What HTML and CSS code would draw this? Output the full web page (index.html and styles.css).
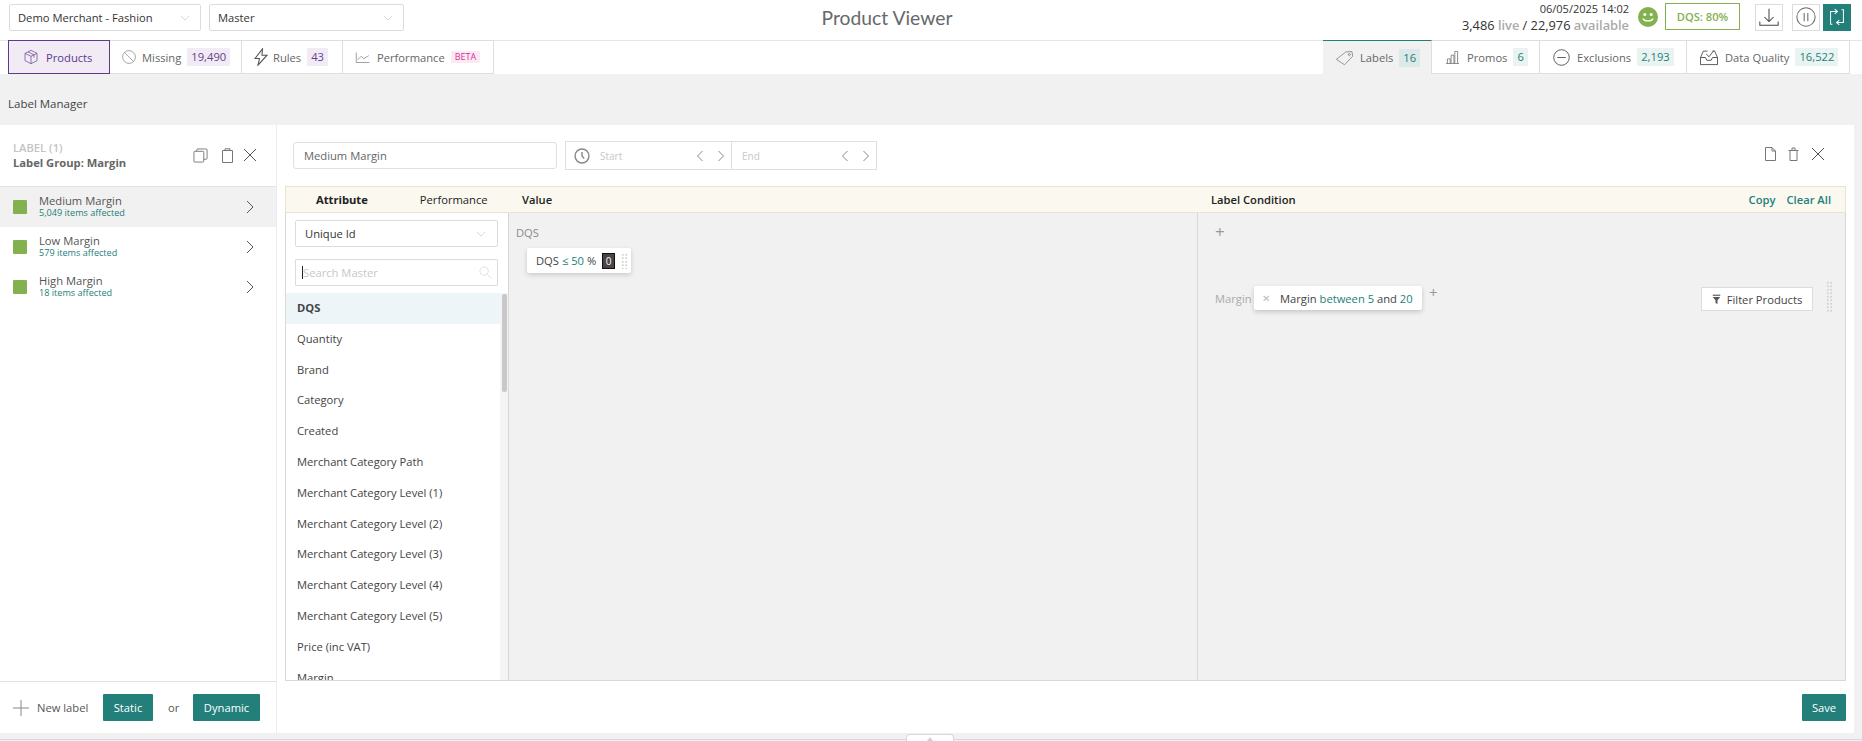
FILE: index.html
```html
<!DOCTYPE html>
<html lang="en">
<head>
<meta charset="utf-8">
<title>Product Viewer</title>
<link rel="stylesheet" href="styles.css">
</head>
<body>
<header class="topbar">
  <div class="selects">
    <div class="select sel-merchant"><span>Demo Merchant - Fashion</span><svg class="chev" viewBox="0 0 12 7"><path d="M1 1l5 5 5-5"/></svg></div>
    <div class="select sel-master"><span>Master</span><svg class="chev" viewBox="0 0 12 7"><path d="M1 1l5 5 5-5"/></svg></div>
  </div>
  <h1 class="title">Product Viewer</h1>
  <div class="status">
    <div class="status-text">
      <div class="status-date">06/05/2025 14:02</div>
      <div class="status-count"><b>3,486</b> <i>live</i> <b>/ 22,976</b> <i>available</i></div>
    </div>
    <svg class="smile" viewBox="0 0 20 20"><circle cx="10" cy="10" r="10" fill="#84b14f"/><circle cx="6.800" cy="7.500" r="1.500" fill="#fff"/><circle cx="13.200" cy="7.500" r="1.500" fill="#fff"/><path d="M5 11.500c1.200 3.200 8.800 3.200 10 0" fill="none" stroke="#fff" stroke-width="1.400"/></svg>
    <div class="dqs">DQS: 80%</div>
    <div class="sq-btn btn-down"><svg viewBox="0 0 24 24"><path d="M12 3v14M7 12l5 5 5-5M2 17v4h20v-4"/></svg></div>
    <div class="sq-btn btn-pause"><svg viewBox="0 0 24 24"><circle cx="12" cy="12" r="10"/><path d="M10 7.500v9M14 7.500v9"/></svg></div>
    <div class="sq-btn btn-swap"><svg viewBox="0 0 24 24"><path d="M7 20h-2V6h7M9.500 3.500L12.500 6 9.500 8.500M17 4h2v14h-7M14.500 15.500L11.500 18l3 2.500"/></svg></div>
  </div>
</header>

<nav class="tabs">
  <div class="tabgroup">
    <div class="tab tab-products">
      <svg class="ico ico-products" viewBox="0 0 24 24"><path d="M12 2l9 4.500v11L12 22l-9-4.500v-11zM3 6.500l9 4.500 9-4.500M12 11v11M7.500 4.300l9 4.500v4"/></svg>
      <span>Products</span>
    </div>
    <div class="tab tab-missing">
      <svg class="ico ico-missing" viewBox="0 0 24 24"><circle cx="12" cy="12" r="11"/><path d="M4.500 4.500l15 15"/></svg>
      <span>Missing</span><em class="pill pill-purple">19,490</em>
    </div>
    <div class="tab tab-rules">
      <svg class="ico ico-rules" viewBox="0 0 14 18"><path d="M8.500 .8L1 10.500h4.500L4 17.200l9-10H8z"/></svg>
      <span>Rules</span><em class="pill pill-purple">43</em>
    </div>
    <div class="tab tab-perf">
      <svg class="ico ico-perf" viewBox="0 0 24 24"><path d="M2 4v16h21M4 16l6-6 4 4 8-5"/></svg>
      <span>Performance</span><em class="pill pill-pink">BETA</em>
    </div>
  </div>
  <div class="tabgroup">
    <div class="tab tab-labels">
      <svg class="ico ico-labels" viewBox="0 0 28 24"><path d="M2 14L16 3l9-.5 1 7L14 22zM21 5.500a1.500 1.500 0 1 0 .1 0"/></svg>
      <span>Labels</span><em class="pill pill-teal-dark">16</em>
    </div>
    <div class="tab tab-promos">
      <svg class="ico ico-promos" viewBox="0 0 14 14"><path d="M0 13.500h14M1.500 13.500v-5h3v5M5.500 13.500v-9h3v9M9.500 13.500V.5h3v13"/></svg>
      <span>Promos</span><em class="pill pill-teal">6</em>
    </div>
    <div class="tab tab-excl">
      <svg class="ico ico-excl ico-dark" viewBox="0 0 24 24"><circle cx="12" cy="12" r="11"/><path d="M6 12h12"/></svg>
      <span>Exclusions</span><em class="pill pill-teal">2,193</em>
    </div>
    <div class="tab tab-dq">
      <svg class="ico ico-dq ico-dark" viewBox="0 0 28 24"><path d="M2 12l4-9h6M26 12l-4-9h-3M2 12v10h24V12h-7l-2 4h-6l-2-4zM10 7l4 4 7-9"/></svg>
      <span>Data Quality</span><em class="pill pill-teal">16,522</em>
    </div>
  </div>
</nav>

<div class="crumb">Label Manager</div>

<main class="panel">
  <aside class="side">
    <div class="side-head">
      <div>
        <div class="side-kicker">LABEL (1)</div>
        <div class="side-title">Label Group: Margin</div>
      </div>
      <div class="side-tools">
        <svg class="tool" viewBox="0 0 16 16"><path d="M1 4.500q0-1 1-1h8.500q1 0 1 1V14q0 1-1 1H2q-1 0-1-1zM4 3.500V2q0-1 1-1h9q1 0 1 1v9q0 1-1 1h-2.500"/></svg>
        <svg class="tool tool-trash" viewBox="0 0 11 15"><path d="M.5 2.500h10V14.500H.5zM3 2.500V.8h5v1.700"/></svg>
        <svg class="tool tool-x" viewBox="0 0 14 14"><path d="M1 1l12 12M13 1L1 13"/></svg>
      </div>
    </div>
    <ul class="labels">
      <li class="label selected"><i class="swatch"></i><div class="label-text"><div class="label-name">Medium Margin</div><div class="label-sub">5,049 items affected</div></div><svg class="arrow" viewBox="0 0 8 14"><path d="M1 1l6 6-6 6"/></svg></li>
      <li class="label"><i class="swatch"></i><div class="label-text"><div class="label-name">Low Margin</div><div class="label-sub">579 items affected</div></div><svg class="arrow" viewBox="0 0 8 14"><path d="M1 1l6 6-6 6"/></svg></li>
      <li class="label"><i class="swatch"></i><div class="label-text"><div class="label-name">High Margin</div><div class="label-sub">18 items affected</div></div><svg class="arrow" viewBox="0 0 8 14"><path d="M1 1l6 6-6 6"/></svg></li>
    </ul>
    <div class="side-foot">
      <svg class="plus-big" viewBox="0 0 16 16"><path d="M8 0v16M0 8h16"/></svg>
      <span class="new-label">New label</span>
      <button class="btn btn-static">Static</button>
      <span class="or">or</span>
      <button class="btn btn-dynamic">Dynamic</button>
    </div>
  </aside>

  <section class="editor">
    <div class="editor-top">
      <div class="name-input">Medium Margin</div>
      <div class="dates">
        <svg class="clock" viewBox="0 0 18 18"><circle cx="9" cy="9" r="7.800"/><path d="M9 4.500V9l2.500 3"/></svg>
        <div class="date date-start"><span>Start</span><svg viewBox="0 0 8 12"><path d="M6.500 1l-5 5 5 5"/></svg><svg viewBox="0 0 8 12"><path d="M1.500 1l5 5-5 5"/></svg></div>
        <div class="date date-end"><span>End</span><svg viewBox="0 0 8 12"><path d="M6.500 1l-5 5 5 5"/></svg><svg viewBox="0 0 8 12"><path d="M1.500 1l5 5-5 5"/></svg></div>
      </div>
      <div class="editor-tools">
        <svg class="tool tool-s" viewBox="0 0 11 14"><path d="M.5.5h6.500l3.500 3.500v9.500H.5zM7 .5V4h3.500"/></svg>
        <svg class="tool tool-s" viewBox="0 0 11 14"><path d="M2 3.500h7v10H2zM.5 3.500h10M4 3.500V1h3v2.500"/></svg>
        <svg class="tool tool-x" viewBox="0 0 14 14"><path d="M1 1l12 12M13 1L1 13"/></svg>
      </div>
    </div>

    <div class="table">
      <div class="thead">
        <div class="th-attr"><b>Attribute</b><span>Performance</span></div>
        <div class="th-value">Value</div>
        <div class="th-cond"><span>Label Condition</span><span class="th-links"><a>Copy</a><a>Clear All</a></span></div>
      </div>
      <div class="tbody">
        <div class="col-attr">
          <div class="attr-controls">
            <div class="select sel-attr"><span>Unique Id</span><svg class="chev" viewBox="0 0 12 7"><path d="M1 1l5 5 5-5"/></svg></div>
            <div class="search"><i class="caret"></i><span>Search Master</span><svg viewBox="0 0 14 14"><circle cx="5.500" cy="5.500" r="4.500"/><path d="M9 9l4.500 4.500"/></svg></div>
          </div>
          <div class="attr-list">
            <ul>
              <li class="active">DQS</li>
              <li>Quantity</li>
              <li>Brand</li>
              <li>Category</li>
              <li>Created</li>
              <li>Merchant Category Path</li>
              <li>Merchant Category Level (1)</li>
              <li>Merchant Category Level (2)</li>
              <li>Merchant Category Level (3)</li>
              <li>Merchant Category Level (4)</li>
              <li>Merchant Category Level (5)</li>
              <li>Price (inc VAT)</li>
              <li>Margin</li>
            </ul>
            <div class="scroll"><div class="thumb"></div></div>
          </div>
        </div>
        <div class="col-value">
          <div class="value-title">DQS</div>
          <div class="chip chip-value">
            <span>DQS <span class="teal">≤ 50</span> %</span><b class="count">0</b><i class="grip"></i>
          </div>
        </div>
        <div class="col-cond">
          <div class="plus-row">+</div>
          <div class="cond-row">
            <span class="cond-label">Margin</span>
            <div class="chip chip-cond"><span class="x">✕</span><span>Margin <span class="teal">between 5</span> and <span class="teal">20</span></span></div>
            <span class="plus-inline">+</span>
            <div class="filter"><svg viewBox="0 0 12 13"><path d="M1 .8h10" stroke="#555" stroke-width="1.500"/><path d="M1 3.300h10L7.300 7.500V12.500L4.700 11V7.500z" fill="#555"/></svg>Filter Products</div>
            <i class="grip grip-tall"></i>
          </div>
        </div>
      </div>
    </div>

    <div class="editor-foot"><button class="btn btn-save">Save</button></div>
  </section>
</main>

<footer class="bottom"><div class="handle"><span></span></div></footer>
</body>
</html>
```
FILE: styles.css
```css
* { box-sizing: border-box; }
html, body { margin: 0; padding: 0; }
body {
  width: 1862px; height: 741px; overflow: hidden;
  background: #f1f1f1;
  font-family: "Open Sans", "Liberation Sans", sans-serif;
  font-size: 11.200px; color: #333;
  display: flex; flex-direction: column;
}
ul { list-style: none; margin: 0; padding: 0; }
em, i { font-style: normal; }

/* top bar */
.topbar {
  height: 40px; flex: none; background: #fff;
  display: grid; grid-template-columns: 1fr auto 1fr; align-items: start;
}
.selects { display: flex; gap: 8px; padding: 4px 0 0 9px; }
.select {
  height: 27px; border: 1px solid #dcdcdc; border-radius: 2px; background: #fff; flex: none;
  display: flex; align-items: center; justify-content: space-between;
  padding: 0 10px 0 8px; color: #333; white-space: nowrap;
}
.sel-merchant { width: 192px; }
.sel-master { width: 195px; }
.chev { width: 10px; height: 6px; fill: none; stroke: #d0d0d0; stroke-width: 1; }
.title {
  margin: 6px 88px 0 0; font: 400 19.300px/24px Lato, sans-serif; color: #66686b;
}
.status { display: flex; justify-content: flex-end; align-items: center; padding: 3px 11px 0 0; height: 31px; }
.status-text { text-align: right; margin-right: 9px; white-space: nowrap; }
.status-date { line-height: 15px; font-size: 11px; color: #333; }
.status-count { line-height: 18px; font-size: 12.800px; font-weight: 600; }
.status-count b { font-weight: 400; color: #333; }
.status-count i { color: #aaa; }
.smile { width: 20px; height: 20px; margin-right: 7px; flex: none; }
.dqs {
  width: 75px; height: 27px; border: 1px solid #84b14f; color: #84b14f; margin-top: -1px;
  font-weight: 600; display: flex; align-items: center; justify-content: center;
  font-size: 11.200px; margin-right: 15px; flex: none;
}
.sq-btn {
  width: 28px; height: 27px; border: 1px solid #dcdcdc; display: flex; align-items: center; justify-content: center; flex: none;
}
.sq-btn svg { width: 22px; height: 22px; fill: none; stroke: #444; stroke-width: 1.100; }
.btn-down { margin-right: 9px; }
.btn-pause { margin-right: 3px; }
.btn-pause svg { stroke: #666; }
.btn-swap { background: #237f7a; border-color: #237f7a; }
.btn-swap svg { stroke: #fff; }

/* tabs */
.tabs {
  height: 34px; flex: none; background: #fff; display: flex; justify-content: space-between;
  padding: 0 12px 0 8px; box-shadow: inset 0 1px #e6e6e6;
}
.tabgroup { display: flex; }
.tab {
  display: flex; align-items: center; height: 34px; padding: 0 0 0 12px; flex: none;
  border: 1px solid #dedede; border-left: 0; color: #666; white-space: nowrap;
}
.tab > span { margin-right: 6px; }
.ico { fill: none; stroke: #777; stroke-width: 1.100; flex: none; margin-right: 6px; }
.ico-dark { stroke: #333; }
.tab-products {
  width: 102px; border: 1px solid #5f3a8c; background: #f0ebf4; color: #5f3a8c; padding-left: 14px;
}
.tab-products .ico { stroke: #6b4a94; width: 16px; height: 18px; margin-right: 7px; }
.tab-missing { width: 132px; }
.ico-missing { width: 14px; height: 14px; }
.tab-rules { width: 101px; }
.ico-rules { width: 14px; height: 18px; margin-right: 5px; stroke: #555; }
.tab-perf { width: 151px; }
.ico-perf { width: 15px; height: 15px; margin-right: 7px; }
.tab-labels {
  width: 109px; background: #f1f1f1; border: 0; border-top: 1px solid #237f7a; border-right: 1px solid #dedede;
}
.ico-labels { width: 19px; height: 18px; }
.tab-promos { width: 108px; padding-left: 14px; }
.ico-promos { width: 13px; height: 13px; margin-right: 8px; stroke-width: .9; }
.tab-excl { width: 147px; padding-left: 13px; }
.ico-excl { width: 17px; height: 17px; margin-right: 7px; }
.tab-dq { width: 163px; padding-left: 12px; border-right: 1px solid #dedede; }
.ico-dq { width: 20px; height: 17px; }
.pill { padding: 0 4px; height: 18px; line-height: 18px; font-weight: 400; border-radius: 1px; }
.pill-purple { background: #f1ebf5; color: #6b3d8e; }
.pill-pink { background: #fbeaf4; color: #d6339a; font-size: 9px; height: 12px; line-height: 12px; }
.pill-teal { background: #e9f3f2; color: #237f7a; }
.pill-teal-dark { background: #dbe9e8; color: #237f7a; }

.crumb { height: 51px; flex: none; padding: 22px 0 0 8px; line-height: 16px; color: #444; font-size: 11.500px; }

/* main panel */
.panel { width: 1854px; height: 608px; flex: none; display: flex; background: #fff; }
.side { width: 277px; border-right: 1px solid #ededed; display: flex; flex-direction: column; flex: none; }
.side-head { height: 61px; flex: none; padding: 16px 19px 0 13px; display: flex; justify-content: space-between; }
.side-kicker { color: #c4c4c4; line-height: 14px; font-weight: 600; }
.side-title { color: #666; line-height: 15px; font-weight: 700; }
.side-tools { display: flex; gap: 10px; padding-top: 7px; align-items: flex-start; }
.tool { width: 15px; height: 15px; fill: none; stroke: #777; stroke-width: 1; flex: none; }
.side-tools .tool:first-child { margin-right: 4px; }
.tool-trash { width: 11px; }
.tool-x { width: 14px; height: 14px; stroke: #555; }
.tool-s { width: 11px; height: 14px; }
.labels { flex: 1; }
.label { height: 40px; display: flex; align-items: center; padding: 0 22px 0 13px; }
.label.selected { height: 41px; background: #f1f1f1; border-top: 1px solid #e2e2e2; }
.swatch { width: 14px; height: 14px; background: #84b14f; border-radius: 1px; margin-right: 12px; flex: none; }
.label-text { flex: 1; padding-bottom: 2px; }
.label-name { line-height: 12px; color: #555; }
.label-sub { line-height: 11px; color: #237f7a; font-size: 9.100px; }
.arrow { width: 8px; height: 14px; fill: none; stroke: #555; stroke-width: 1; }
.side-foot { height: 52px; flex: none; border-top: 1px solid #e2e2e2; display: flex; align-items: center; padding-left: 13px; }
.plus-big { width: 16px; height: 16px; fill: none; stroke: #888; margin-right: 8px; flex: none; }
.new-label { color: #555; width: 51px; margin-right: 15px; white-space: nowrap; }
.or { color: #555; margin: 0 15px; width: 10px; text-align: center; }
.btn {
  height: 27px; border: 0; border-radius: 1px; background: #237f7a; color: #fff;
  font: 400 11.200px "Open Sans", sans-serif; padding: 0; flex: none;
}
.btn-static { width: 50px; }
.btn-dynamic { width: 67px; }
.btn-save { width: 44px; }

.editor { flex: 1; display: flex; flex-direction: column; min-width: 0; padding-right: 8px; }
.editor-top { height: 61px; flex: none; display: flex; align-items: flex-start; padding: 16px 0 0 16px; }
.name-input {
  width: 264px; height: 27px; border: 1px solid #e0e0e0; border-radius: 3px; padding: 0 10px;
  line-height: 25px; color: #666; margin: 1px 8px 0 0;
}
.dates { width: 312px; height: 29px; border: 1px solid #dfdfdf; display: flex; align-items: center; }
.clock { width: 16px; height: 16px; fill: none; stroke: #888; stroke-width: 1.600; margin: 0 10px 0 8px; flex: none; }
.date { display: flex; align-items: center; height: 100%; color: #c8c8c8; font-size: 10px; }
.date span { flex: 1; }
.date svg { width: 8px; height: 12px; fill: none; stroke: #888; stroke-width: 1; margin-right: 13px; }
.date svg:last-child { margin-right: 6px; }
.date-start { width: 131px; }
.date-end { flex: 1; padding-left: 10px; border-left: 1px solid #dfdfdf; }
.editor-tools { margin-left: auto; display: flex; align-items: center; gap: 12px; padding: 6px 21px 0 0; }

.table { margin-left: 8px; flex: 1; min-height: 0; display: flex; flex-direction: column; }
.thead {
  height: 27px; background: #fbf8f0; border: 1px solid #eae4cf; display: flex; align-items: center;
  font-weight: 600; color: #222; flex: none;
}
.th-attr { width: 223px; display: flex; padding-left: 30px; flex: none; }
.th-attr b { font-weight: 700; margin-right: 52px; }
.th-attr span { font-weight: 400; }
.th-value { width: 688px; padding-left: 13px; flex: none; }
.th-cond { flex: 1; display: flex; justify-content: space-between; padding: 0 14px; }
.th-links a { color: #237f7a; margin-left: 11px; }
.tbody { flex: 1; min-height: 0; display: flex; border: 1px solid #d8d8d8; border-top: 0; }
.col-attr { width: 223px; flex: none; background: #fff; border-right: 1px solid #d8d8d8; display: flex; flex-direction: column; min-height: 0; }
.attr-controls { padding: 7px 9px; display: flex; flex-direction: column; gap: 12px; flex: none; }
.sel-attr { width: 203px; padding: 0 11px 0 9px; }
.search {
  width: 203px; height: 27px; border: 1px solid #dcdcdc; border-radius: 1px; display: flex; align-items: center; padding-left: 6px; color: #c8c8c8;
}
.search span { flex: 1; }
.caret { width: 1px; height: 13px; background: #222; }
.search svg { width: 13px; height: 13px; fill: none; stroke: #ddd; stroke-width: 1; margin-right: 5px; }
.attr-list { flex: 1; min-height: 0; display: flex; overflow: hidden; }
.attr-list ul { flex: 1; }
.attr-list li { height: 30.800px; line-height: 30.800px; padding-left: 11px; color: #444; white-space: nowrap; }
.attr-list li.active { background: #edf5f8; font-weight: 700; }
.scroll { width: 8px; background: #f4f4f4; flex: none; }
.thumb { width: 5px; height: 98px; margin: 1px 0 0 2px; background: #c8c8c8; border-radius: 2px; }
.col-value { width: 688px; flex: none; background: #f1f1f1; padding: 12px 0 0 7px; }
.value-title { color: #8a8a8a; line-height: 15px; margin-bottom: 8px; }
.chip { background: #fff; border-radius: 2px; box-shadow: 0 2px 5px rgba(0,0,0,.16); display: inline-flex; align-items: center; color: #444; white-space: nowrap; }
.chip-value { height: 25px; margin-left: 11px; padding: 0 3px 0 9px; width: 104px; }
.teal { color: #237f7a; }
.count { background: #4a4444; color: #fff; width: 13px; height: 16px; line-height: 15px; text-align: center; margin-left: auto; font-weight: 400; border: 1px solid #111; font-size: 10px; }
.grip {
  width: 7px; height: 16px; margin-left: 6px; flex: none;
  background-image: radial-gradient(circle, #d0d0d0 1.100px, transparent 1.200px);
  background-size: 3.500px 3.500px;
}
.col-cond { flex: 1; min-width: 0; border-left: 1px solid #d8d8d8; background: #f1f1f1; padding: 0 12px 0 17px; }
.plus-row { height: 41px; padding-top: 9px; color: #999; font-size: 17px; line-height: 20px; }
.cond-row { display: flex; align-items: center; margin-top: 32px; height: 24px; }
.cond-label { color: #aaa; width: 36px; margin-right: 3px; flex: none; white-space: nowrap; }
.chip-cond { height: 24px; width: 168px; flex: none; padding-left: 8px; box-shadow: 0 2px 5px rgba(0,0,0,.18); }
.x { color: #bbb; width: 10px; margin-right: 8px; font-size: 10px; line-height: 10px; }
.plus-inline { color: #999; font-size: 15px; align-self: flex-start; margin: -2px 0 0 7px; line-height: 16px; }
.filter {
  margin: 2px 0 0 auto; width: 112px; height: 24px; background: #fff; border: 1px solid #dcdcdc; display: flex; align-items: center;
  justify-content: center; color: #444; flex: none; white-space: nowrap;
}
.filter svg { width: 9px; height: 11px; margin-right: 6px; fill: none; flex: none; }
.grip-tall { height: 31px; margin: -3px 0 0 13px; }
.editor-foot { height: 52px; flex: none; display: flex; justify-content: flex-end; padding-top: 13px; }

.bottom { flex: 1; position: relative; }
.bottom::after { content: ""; display: block; margin-top: 6px; border-top: 1px solid #d8d8d8; }
.handle {
  position: absolute; left: 906px; top: 1px; width: 48px; height: 8px; background: #fff; border: 1px solid #d8d8d8; border-bottom: 0; border-radius: 4px 4px 0 0;
  display: flex; justify-content: center; padding-top: 2px; z-index: 1;
}
.handle span { width: 0; height: 0; border: 3px solid transparent; border-top: 0; border-bottom: 4px solid #d0d0d0; }
```
